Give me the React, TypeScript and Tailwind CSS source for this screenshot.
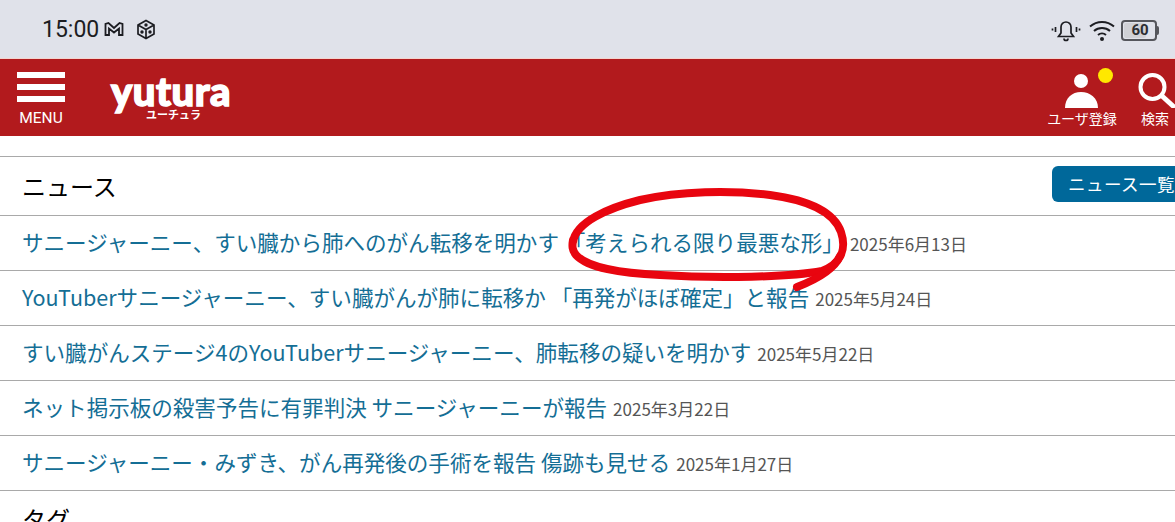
const jp = "font-['Noto_Sans_CJK_JP','Noto_Sans',sans-serif]";

const news = [
  { title: "サニージャーニー、すい臓から肺へのがん転移を明かす 「考えられる限り最悪な形」", date: "2025年6月13日" },
  { title: "YouTuberサニージャーニー、すい臓がんが肺に転移か 「再発がほぼ確定」と報告", date: "2025年5月24日" },
  { title: "すい臓がんステージ4のYouTuberサニージャーニー、肺転移の疑いを明かす", date: "2025年5月22日" },
  { title: "ネット掲示板の殺害予告に有罪判決 サニージャーニーが報告", date: "2025年3月22日" },
  { title: "サニージャーニー・みずき、がん再発後の手術を報告 傷跡も見せる", date: "2025年1月27日" },
];

function StatusBar() {
  return (
    <div className="flex h-[58px] items-center justify-between bg-[#e0e2ea] pl-[42px] pr-[16px] text-[#1c1d22]">
      <div className="flex items-center">
        <span className="font-['Roboto',sans-serif] text-[23px] leading-none">15:00</span>
        {/* mail */}
        <svg className="ml-[5px]" width="20" height="16" viewBox="0 0 20 16" fill="none" stroke="#1c1d22" strokeWidth="1.800">
          <path d="M1.500 14V3l3-1 5.500 5 5.500-5 3 1v11h-3.500V7.500L10 11.500 5 7.500V14z" />
        </svg>
        {/* dice */}
        <svg className="ml-[12px]" width="20" height="21" viewBox="0 0 20 21" fill="none" stroke="#1c1d22" strokeWidth="1.700">
          <path d="M10 1.500l8 4.500v9l-8 4.500-8-4.500V6zM2 6l8 4.500L18 6M10 10.500v9" />
          <circle cx="10" cy="6" r="1.700" fill="#1c1d22" stroke="none" />
          <circle cx="6" cy="13" r="1.700" fill="#1c1d22" stroke="none" />
          <circle cx="14" cy="13" r="1.700" fill="#1c1d22" stroke="none" />
        </svg>
      </div>
      <div className="mt-[2px] flex items-center">
        {/* vibrate bell */}
        <svg width="30" height="26" viewBox="0 0 30 26" fill="none" stroke="#1c1d22" strokeWidth="1.700">
          <path d="M7.500 19.500h15l-2.500-3.500V10a5 5 0 0 0-10 0v6zM13 21.500a2 2 0 0 0 4 0" />
          <path d="M4.500 10v5M1.500 11.500v2M25.500 10v5M28.500 11.500v2" />
        </svg>
        {/* wifi */}
        <svg className="ml-[7px]" width="28" height="24" viewBox="0 0 28 24" fill="none" stroke="#1c1d22" strokeWidth="2">
          <path d="M2 8.500c7-6 17-6 24 0M6 13c4.500-4 11.500-4 16 0M10 17c2.300-2 5.700-2 8 0" />
          <circle cx="14" cy="21" r="2" fill="#1c1d22" stroke="none" />
        </svg>
        {/* battery */}
        <div className="ml-[5px] flex items-center">
          <div className="flex h-[21px] w-[36px] items-center rounded-[4px] border-2 border-[#55565c] p-[1px]">
            <div className="flex h-full w-[22px] items-center justify-center rounded-[2px] bg-[#d0d1d6] font-['Roboto',sans-serif] text-[15px] font-bold leading-none text-[#2c2d32]">
              <span className="pl-[10px]">60</span>
            </div>
          </div>
          <div className="h-[9px] w-[2px] rounded-r-[2px] bg-[#55565c]" />
        </div>
      </div>
    </div>
  );
}

function Header() {
  return (
    <div className="flex h-[78px] items-center justify-between border-t border-[#f3d5cf] bg-[#b21a1d] text-white">
      <div className="flex items-center">
        <div className="ml-[17px] flex w-[48px] flex-col items-center">
          <div className="flex w-[48px] flex-col gap-[6px] pt-[4px]">
            <div className="h-[6px] bg-white" />
            <div className="h-[6px] bg-white" />
            <div className="h-[6px] bg-white" />
          </div>
          <span className="mt-[7px] font-['Roboto',sans-serif] text-[15.500px] leading-[18px]">MENU</span>
        </div>
        <div className="ml-[46px] flex flex-col items-center">
          <span className="font-['Lato',sans-serif] text-[40px] font-black leading-[33px] tracking-[0.5px] [-webkit-text-stroke:1.500px_white]">yutura</span>
          <span className={`${jp} pl-[5px] pt-[1px] text-[11px] font-bold leading-[11px]`}>ユーチュラ</span>
        </div>
      </div>
      <div className="flex items-start pt-[2px]">
        <div className="relative flex w-[72px] flex-col items-center">
          <svg width="34" height="37" viewBox="0 0 34 37" fill="white">
            <circle cx="16" cy="9" r="7" />
            <path d="M0 36c0-10 7-16 16-16s17 6 17 16z" />
          </svg>
          <span className="absolute right-[5px] top-[-4px] h-[15px] w-[15px] rounded-full bg-[#ffe800]" />
          <span className={`${jp} mt-[1px] whitespace-nowrap text-[14px] leading-[16px]`}>ユーザ登録</span>
        </div>
        <div className="ml-[20px] flex w-[37px] flex-col items-start">
          {/* magnifier, a thicker one than the icon packages have */}
          <svg width="37" height="36" viewBox="0 0 37 36" fill="none" stroke="white" strokeLinecap="round">
            <circle cx="14.500" cy="15" r="12" strokeWidth="4" />
            <path d="M24 24l11 10" strokeWidth="5" />
          </svg>
          <span className={`${jp} ml-[3px] mt-[2px] whitespace-nowrap text-[14px] leading-[16px]`}>検索</span>
        </div>
      </div>
    </div>
  );
}

export default function App() {
  return (
    <div className={`${jp} relative h-[522px] w-[1175px] overflow-hidden bg-white`}>
      <StatusBar />
      <Header />
      <div className="mt-[20px] border-t border-[#a9a9a9]">
        <div className="flex h-[58px] items-center justify-between pl-[22px]">
          <h2 className="mt-[-1px] text-[24px] text-black">ニュース</h2>
          <a className="mr-[-16px] mt-[-4px] flex h-[36px] w-[139px] items-center overflow-hidden whitespace-nowrap rounded-[6px] bg-[#00689a] pl-[16px] text-[17.500px] tracking-[0.5px] text-white">ニュース一覧</a>
        </div>
        <ul className="border-t border-[#a9a9a9]">
          {news.map((n) => (
            <li key={n.date} className="flex h-[55px] items-center whitespace-nowrap border-b border-[#a9a9a9] pl-[22px]">
              <a className="mt-[-2px] text-[21.550px] text-[#146e95]">{n.title}</a>
              <span className="ml-[6px] mt-[2px] text-[17px] text-[#555555]">{n.date}</span>
            </li>
          ))}
        </ul>
        <h2 className="mt-[10px] pl-[22px] text-[24px] text-black">タグ</h2>
      </div>
      {/* red hand-drawn circle over the first row */}
      <svg className="absolute left-0 top-0" width="1175" height="522" fill="none" stroke="#e8050f" strokeWidth="8" strokeLinecap="round" strokeLinejoin="round">
        <path d="M573 242C576 222 608 208 640 200C680 191 730 190 770 195C808 200 834 212 841 232C847 250 840 264 822 271C790 277 720 279 660 275C620 273 588 268 576 255C572 250 572 246 573 240" />
        <path d="M840 256C834 270 815 280 797 287" />
      </svg>
    </div>
  );
}
